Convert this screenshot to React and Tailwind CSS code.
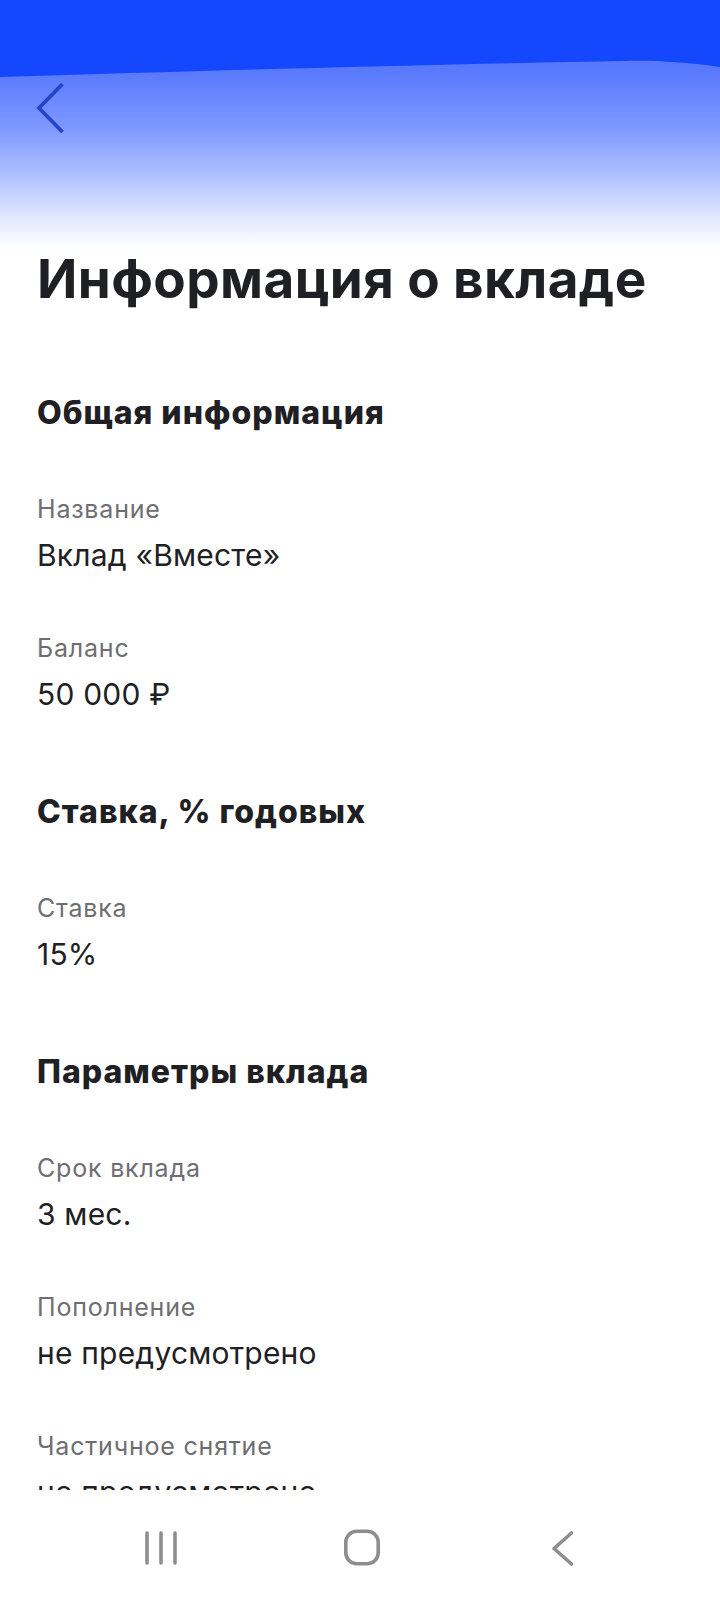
import React from "react";

function Item({ label, value }) {
  return (
    <div>
      <div className="text-[25px] leading-[30px] tracking-[0.8px] text-[#6e6e72]">{label}</div>
      <div className="mt-[11px] text-[30px] leading-[40px] tracking-[0.2px] text-[#1f2023]">{value}</div>
    </div>
  );
}

function Heading({ children }) {
  return (
    <div className="text-[32px] leading-[40px] font-extrabold tracking-[1px] text-[#1f2023]">{children}</div>
  );
}

export default function App() {
  return (
    <div
      className="w-[720px] h-[1600px] bg-white flex flex-col overflow-hidden"
      style={{ fontFamily: "Inter, 'Noto Sans', sans-serif" }}
    >
      <div className="h-[1490px] overflow-hidden">
        <div className="relative h-[249px] bg-[linear-gradient(180deg,#4a6bfb_0%,#5b7bfd_30%,#7c96ff_50%,#adbfff_70%,#e2e9ff_88%,#ffffff_100%)]">
          <svg
            className="absolute left-0 top-0"
            width="720"
            height="80"
            viewBox="0 0 720 80"
          >
            <path
              d="M0 0 H720 V67 C700 64 660 60 625 61 C500 63 250 69 0 77 Z"
              fill="#1547ff"
            />
          </svg>
          <div className="relative pt-[82px] pl-[36px]">
            <svg width="32" height="52" viewBox="0 0 32 52">
              <polyline
                points="26.5,2 3,26 26.5,50"
                fill="none"
                stroke="#2644c8"
                strokeWidth="3.8"
                strokeLinejoin="miter"
              />
            </svg>
          </div>
        </div>

        <div className="px-[37px]">
          <h1 className="text-[53px] leading-[60px] font-bold tracking-[0.4px] text-[#1f2023]">
            Информация о вкладе
          </h1>

          <div className="mt-[84px]">
            <Heading>Общая информация</Heading>
            <div className="mt-[61px] flex flex-col gap-[58px]">
              <Item label="Название" value="Вклад «Вместе»" />
              <Item label="Баланс" value="50 000 ₽" />
            </div>
          </div>

          <div className="mt-[78px]">
            <Heading>Ставка, % годовых</Heading>
            <div className="mt-[61px] flex flex-col gap-[58px]">
              <Item label="Ставка" value="15%" />
            </div>
          </div>

          <div className="mt-[78px]">
            <Heading>Параметры вклада</Heading>
            <div className="mt-[61px] flex flex-col gap-[58px]">
              <Item label="Срок вклада" value="3 мес." />
              <Item label="Пополнение" value="не предусмотрено" />
              <Item label="Частичное снятие" value="не предусмотрено" />
            </div>
          </div>
        </div>
      </div>

      <div className="h-[110px] bg-white flex items-start pt-[38px] pl-[141px] gap-[161px]">
        <svg width="40" height="40" viewBox="0 0 40 40">
          <g stroke="#8e8e8e" strokeWidth="3.6" strokeLinecap="round">
            <line x1="6" y1="5" x2="6" y2="35" />
            <line x1="20" y1="5" x2="20" y2="35" />
            <line x1="34" y1="5" x2="34" y2="35" />
          </g>
        </svg>
        <svg width="40" height="40" viewBox="0 0 40 40">
          <rect
            x="3.8"
            y="3.3"
            width="32.4"
            height="32.4"
            rx="11"
            fill="none"
            stroke="#8e8e8e"
            strokeWidth="3.6"
          />
        </svg>
        <svg width="40" height="40" viewBox="0 0 40 40">
          <polyline
            points="28.5,5 11,20.5 28.5,36"
            fill="none"
            stroke="#8e8e8e"
            strokeWidth="3.6"
            strokeLinecap="round"
            strokeLinejoin="round"
          />
        </svg>
      </div>
    </div>
  );
}
